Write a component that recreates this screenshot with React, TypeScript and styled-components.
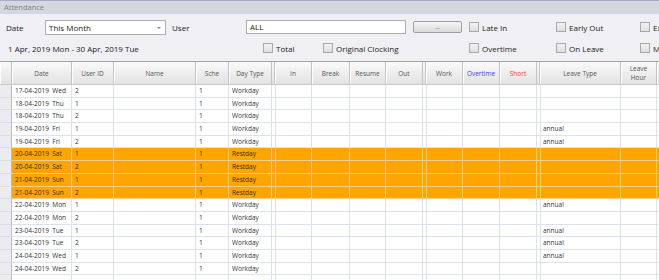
import styled, { createGlobalStyle } from "styled-components";

const GlobalStyle = createGlobalStyle`
  html, body {
    margin: 0;
    padding: 0;
    width: 659px;
    height: 280px;
    overflow: hidden;
    background: #efeff4;
    font-family: "Open Sans", "Liberation Sans", sans-serif;
  }
`;

const Window = styled.div`
  width: 659px;
  height: 280px;
  overflow: hidden;
  display: flex;
  flex-direction: column;
  background: #efeff4;
`;

const TitleBar = styled.div`
  height: 13px;
  flex: none;
  border-top: 1px solid #a8a6c6;
  background: #d3d7df;
  color: #7d818a;
  font-size: 7.5px;
  line-height: 13px;
  padding-left: 4px;
`;

const Form = styled.div`
  display: flex;
  flex-direction: column;
  flex: none;
  padding-top: 5px;
  height: 42px;
`;

const FormRow = styled.div<{ $pad: number; $h: number }>`
  display: flex;
  align-items: center;
  height: ${(p) => p.$h}px;
  padding-left: ${(p) => p.$pad}px;
  font-size: 8px;
  color: #222;
  white-space: nowrap;
`;

const Slot = styled.div<{ $w: number }>`
  width: ${(p) => p.$w}px;
  flex: none;
  display: flex;
  align-items: center;
  overflow: hidden;
`;

const Select = styled.div`
  position: relative;
  width: 121px;
  height: 15px;
  box-sizing: border-box;
  border: 1px solid #abadb3;
  background: #fff;
  padding-left: 3px;
  line-height: 13px;
  flex: none;
  margin-right: 6px;
  &::after {
    content: "";
    position: absolute;
    right: 4px;
    top: 6px;
    border-left: 2.5px solid transparent;
    border-right: 2.5px solid transparent;
    border-top: 2.5px solid #8a8a8a;
  }
`;

const TextInput = styled.div`
  width: 160px;
  height: 14px;
  box-sizing: border-box;
  border: 1px solid #abadb3;
  background: #fff;
  padding-left: 3px;
  line-height: 12px;
  flex: none;
  margin-right: 7px;
`;

const DotsButton = styled.div`
  width: 49px;
  height: 12px;
  box-sizing: border-box;
  border: 1px solid #a0a0a0;
  border-radius: 2px;
  background: linear-gradient(#f6f6f6, #dadada);
  font-size: 6px;
  line-height: 11px;
  text-align: center;
  color: #333;
  flex: none;
  margin-right: 7px;
`;

const Box = styled.span`
  width: 10px;
  height: 10px;
  box-sizing: border-box;
  border: 1px solid #a9a9a9;
  background: linear-gradient(#f3f3f3, #dedede);
  margin-right: 3px;
  flex: none;
`;

const Check = ({ label, w }: { label: string; w: number }) => (
  <Slot $w={w}>
    <Box />
    {label}
  </Slot>
);

type Col = { key: string; title: string; w: number; color?: string; sep?: boolean };

const columns: Col[] = [
  { key: "rh", title: "", w: 12 },
  { key: "date", title: "Date", w: 60 },
  { key: "uid", title: "User ID", w: 42 },
  { key: "name", title: "Name", w: 82 },
  { key: "sche", title: "Sche", w: 33 },
  { key: "dtype", title: "Day Type", w: 43 },
  { key: "s1", title: "", w: 3, sep: true },
  { key: "in", title: "In", w: 37 },
  { key: "break", title: "Break", w: 38 },
  { key: "resume", title: "Resume", w: 36 },
  { key: "out", title: "Out", w: 37 },
  { key: "s2", title: "", w: 3, sep: true },
  { key: "work", title: "Work", w: 37 },
  { key: "ot", title: "Overtime", w: 37, color: "#3b3bf5" },
  { key: "short", title: "Short", w: 37, color: "#f23c3c" },
  { key: "s3", title: "", w: 3, sep: true },
  { key: "ltype", title: "Leave Type", w: 81 },
  { key: "lhour", title: "Leave\nHour", w: 36 },
  { key: "more", title: "", w: 100 },
];

const template = columns.map((c) => `${c.w}px`).join(" ");

const Grid = styled.div`
  flex: 1;
  min-height: 0;
  border-top: 1px solid #a3a3a3;
  background: #fff;
  overflow: hidden;
`;

const HeaderRow = styled.div`
  display: grid;
  grid-template-columns: ${template};
  height: 22px;
  border-bottom: 1px solid #c9c9c9;
  background: linear-gradient(#fafafa, #e2e2e2);
`;

const HeadCell = styled.div<{ $color?: string; $sep?: boolean }>`
  box-sizing: border-box;
  border-right: 1px solid #c4c4c4;
  box-shadow: ${(p) => (p.$sep ? "none" : "inset 1px 0 #fdfdfd")};
  display: flex;
  align-items: center;
  justify-content: center;
  text-align: center;
  white-space: pre-line;
  font-size: 6.5px;
  line-height: 9px;
  color: ${(p) => p.$color || "#555"};
`;

const DataRow = styled.div<{ $rest: boolean }>`
  display: grid;
  grid-template-columns: ${template};
  height: 12.7px;
  background: ${(p) => (p.$rest ? "#ffa500" : "#fff")};
`;

const Cell = styled.div<{ $rest: boolean; $rh?: boolean }>`
  box-sizing: border-box;
  border-right: 1px solid ${(p) => (p.$rh ? "#b9bcc4" : p.$rest ? "#f6cd87" : "#dde2ea")};
  border-bottom: 1px solid ${(p) => (p.$rh ? "#dcdde3" : p.$rest ? "#f6cd87" : "#dde2ea")};
  background: ${(p) => (p.$rh ? "#ebebf0" : "transparent")};
  padding-left: 3px;
  font-size: 6.5px;
  line-height: 11.7px;
  color: ${(p) => (p.$rest ? "#3a2800" : "#333")};
  white-space: pre;
  overflow: hidden;
`;

type Rec = { date: string; day: string; uid: string; dtype: string; leave?: string };

const rows: Rec[] = [
  { date: "17-04-2019", day: "Wed", uid: "2", dtype: "Workday" },
  { date: "18-04-2019", day: "Thu", uid: "1", dtype: "Workday" },
  { date: "18-04-2019", day: "Thu", uid: "2", dtype: "Workday" },
  { date: "19-04-2019", day: "Fri", uid: "1", dtype: "Workday", leave: "annual" },
  { date: "19-04-2019", day: "Fri", uid: "2", dtype: "Workday", leave: "annual" },
  { date: "20-04-2019", day: "Sat", uid: "1", dtype: "Restday" },
  { date: "20-04-2019", day: "Sat", uid: "2", dtype: "Restday" },
  { date: "21-04-2019", day: "Sun", uid: "1", dtype: "Restday" },
  { date: "21-04-2019", day: "Sun", uid: "2", dtype: "Restday" },
  { date: "22-04-2019", day: "Mon", uid: "1", dtype: "Workday", leave: "annual" },
  { date: "22-04-2019", day: "Mon", uid: "2", dtype: "Workday" },
  { date: "23-04-2019", day: "Tue", uid: "1", dtype: "Workday", leave: "annual" },
  { date: "23-04-2019", day: "Tue", uid: "2", dtype: "Workday", leave: "annual" },
  { date: "24-04-2019", day: "Wed", uid: "1", dtype: "Workday", leave: "annual" },
  { date: "24-04-2019", day: "Wed", uid: "2", dtype: "Workday" },
  { date: "", day: "", uid: "", dtype: "" },
];

const cellText = (r: Rec, key: string) => {
  switch (key) {
    case "date":
      return r.date ? `${r.date}  ${r.day}` : "";
    case "uid":
      return r.uid;
    case "sche":
      return r.date ? "1" : "";
    case "dtype":
      return r.dtype;
    case "ltype":
      return r.leave || "";
    default:
      return "";
  }
};

const App = () => {
  return (
    <>
      <GlobalStyle />
      <Window>
        <TitleBar>Attendance</TitleBar>
        <Form>
          <FormRow $pad={6} $h={16}>
            <Slot $w={39}>Date</Slot>
            <Select>This Month</Select>
            <Slot $w={74}>User</Slot>
            <TextInput>ALL</TextInput>
            <DotsButton>...</DotsButton>
            <Check label="Late In" w={87} />
            <Check label="Early Out" w={84} />
            <Check label="Extra" w={40} />
          </FormRow>
          <FormRow $pad={8} $h={26}>
            <Slot $w={255}>1 Apr, 2019 Mon - 30 Apr, 2019 Tue</Slot>
            <Check label="Total" w={60} />
            <Check label="Original Clocking" w={146} />
            <Check label="Overtime" w={87} />
            <Check label="On Leave" w={84} />
            <Check label="Missing" w={40} />
          </FormRow>
        </Form>
        <Grid>
          <HeaderRow>
            {columns.map((c) => (
              <HeadCell key={c.key} $color={c.color} $sep={c.sep}>
                {c.title}
              </HeadCell>
            ))}
          </HeaderRow>
          {rows.map((r, i) => {
            const rest = r.dtype === "Restday";
            return (
              <DataRow key={i} $rest={rest}>
                {columns.map((c) => (
                  <Cell key={c.key} $rest={rest} $rh={c.key === "rh"}>
                    {cellText(r, c.key)}
                  </Cell>
                ))}
              </DataRow>
            );
          })}
        </Grid>
      </Window>
    </>
  );
};

export default App;
